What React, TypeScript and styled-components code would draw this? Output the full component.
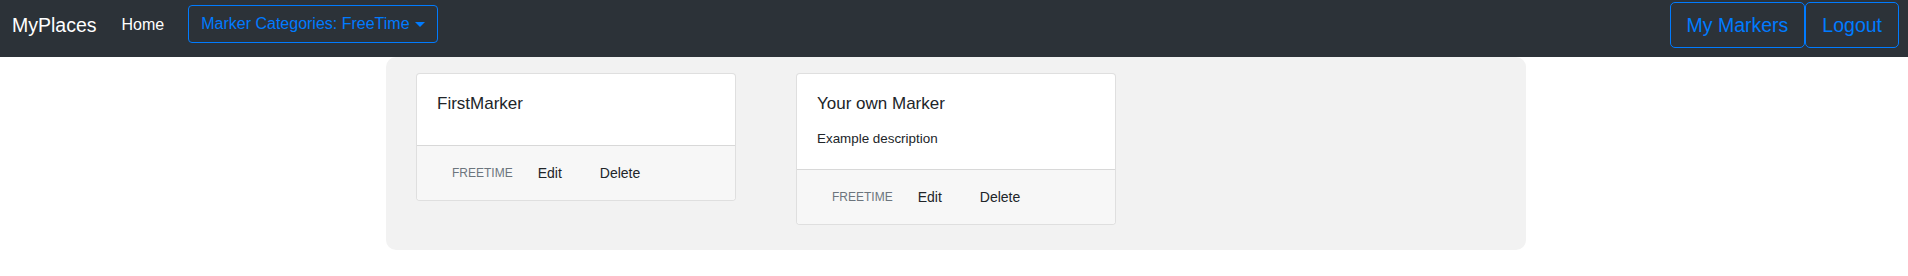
import styled, { createGlobalStyle } from "styled-components";

const GlobalStyle = createGlobalStyle`
    body {
        margin: 0;
        background: #ffffff;
        font-family: "Liberation Sans", Arial, sans-serif;
        color: #212529;
    }
    * {
        box-sizing: border-box;
    }
`;

interface Marker {
    id: number;
    name: string;
    description?: string;
    category: string;
}

const markers: Marker[] = [
    { id: 1, name: "FirstMarker", category: "FreeTime" },
    { id: 2, name: "Your own Marker", description: "Example description", category: "FreeTime" },
];

export default function App() {
    return (
        <>
            <GlobalStyle />
            <NavBar>
                <Brand href="#">MyPlaces</Brand>
                <NavLink href="#">Home</NavLink>
                <DropdownToggle type="button">
                    Marker Categories: FreeTime
                    <Caret />
                </DropdownToggle>
                <RightGroup>
                    <LargeOutlineButton type="button">My Markers</LargeOutlineButton>
                    <LargeOutlineButton type="button">Logout</LargeOutlineButton>
                </RightGroup>
            </NavBar>
            <Panel>
                {markers.map((marker) => (
                    <Card key={marker.id}>
                        <CardBody>
                            <CardTitle>{marker.name}</CardTitle>
                            {marker.description && <CardText>{marker.description}</CardText>}
                        </CardBody>
                        <CardFooter>
                            <Category>{marker.category}</Category>
                            <FooterButton type="button">Edit</FooterButton>
                            <FooterButton type="button">Delete</FooterButton>
                        </CardFooter>
                    </Card>
                ))}
            </Panel>
        </>
    );
}

const NavBar = styled.nav`
    display: flex;
    align-items: center;
    padding: 2px 9px 9px 12px;
    background: #2c3238;
`;

const Brand = styled.a`
    font-size: 19.5px;
    line-height: 30px;
    color: #ffffff;
    text-decoration: none;
    margin-right: 17px;
`;

const NavLink = styled.a`
    font-size: 16px;
    line-height: 24px;
    color: #ffffff;
    text-decoration: none;
    padding: 0 8px;
    margin-right: 16px;
`;

const DropdownToggle = styled.button`
    display: flex;
    align-items: center;
    height: 38px;
    margin-top: -2px;
    padding: 0 12px;
    background: transparent;
    border: 1px solid #007bff;
    border-radius: 4px;
    color: #007bff;
    font-family: inherit;
    font-size: 16px;
    cursor: pointer;
`;

const Caret = styled.span`
    display: inline-block;
    margin-left: 5px;
    width: 0;
    height: 0;
    border-top: 5px solid #007bff;
    border-left: 5px solid transparent;
    border-right: 5px solid transparent;
`;

const RightGroup = styled.div`
    display: flex;
    margin-left: auto;
`;

const LargeOutlineButton = styled.button`
    height: 46px;
    padding: 0 16px;
    background: transparent;
    border: 1px solid #007bff;
    border-radius: 5px;
    color: #007bff;
    font-family: inherit;
    font-size: 19.5px;
    cursor: pointer;
`;

const Panel = styled.main`
    display: grid;
    grid-template-columns: repeat(3, 380px);
    align-items: start;
    width: 1140px;
    margin: 0 0 0 calc(50% - 568px);
    padding: 16px 0 25px;
    background: #f2f2f2;
    border-radius: 10px;
`;

const Card = styled.div`
    width: 320px;
    margin-left: 30px;
    background: #ffffff;
    border: 1px solid rgba(0, 0, 0, 0.125);
    border-radius: 4px;
    overflow: hidden;
`;

const CardBody = styled.div`
    padding: 20px;
`;

const CardTitle = styled.h5`
    margin: 0 0 11px;
    font-size: 17px;
    font-weight: 400;
    line-height: 20px;
    color: #212529;
`;

const CardText = styled.p`
    margin: 15px 0 0;
    font-size: 13.4px;
    line-height: 20px;
    color: #212529;
`;

const CardFooter = styled.div`
    display: flex;
    align-items: center;
    height: 55px;
    padding: 0 20px;
    background: #f7f7f7;
    border-top: 1px solid rgba(0, 0, 0, 0.125);
`;

const Category = styled.span`
    margin-left: 15px;
    font-size: 12px;
    line-height: 30px;
    text-transform: uppercase;
    color: #6c757d;
`;

const FooterButton = styled.button`
    margin-left: 12px;
    padding: 0 13px;
    height: 30px;
    background: transparent;
    border: none;
    font-family: inherit;
    font-size: 14px;
    color: #212529;
    cursor: pointer;
`;
